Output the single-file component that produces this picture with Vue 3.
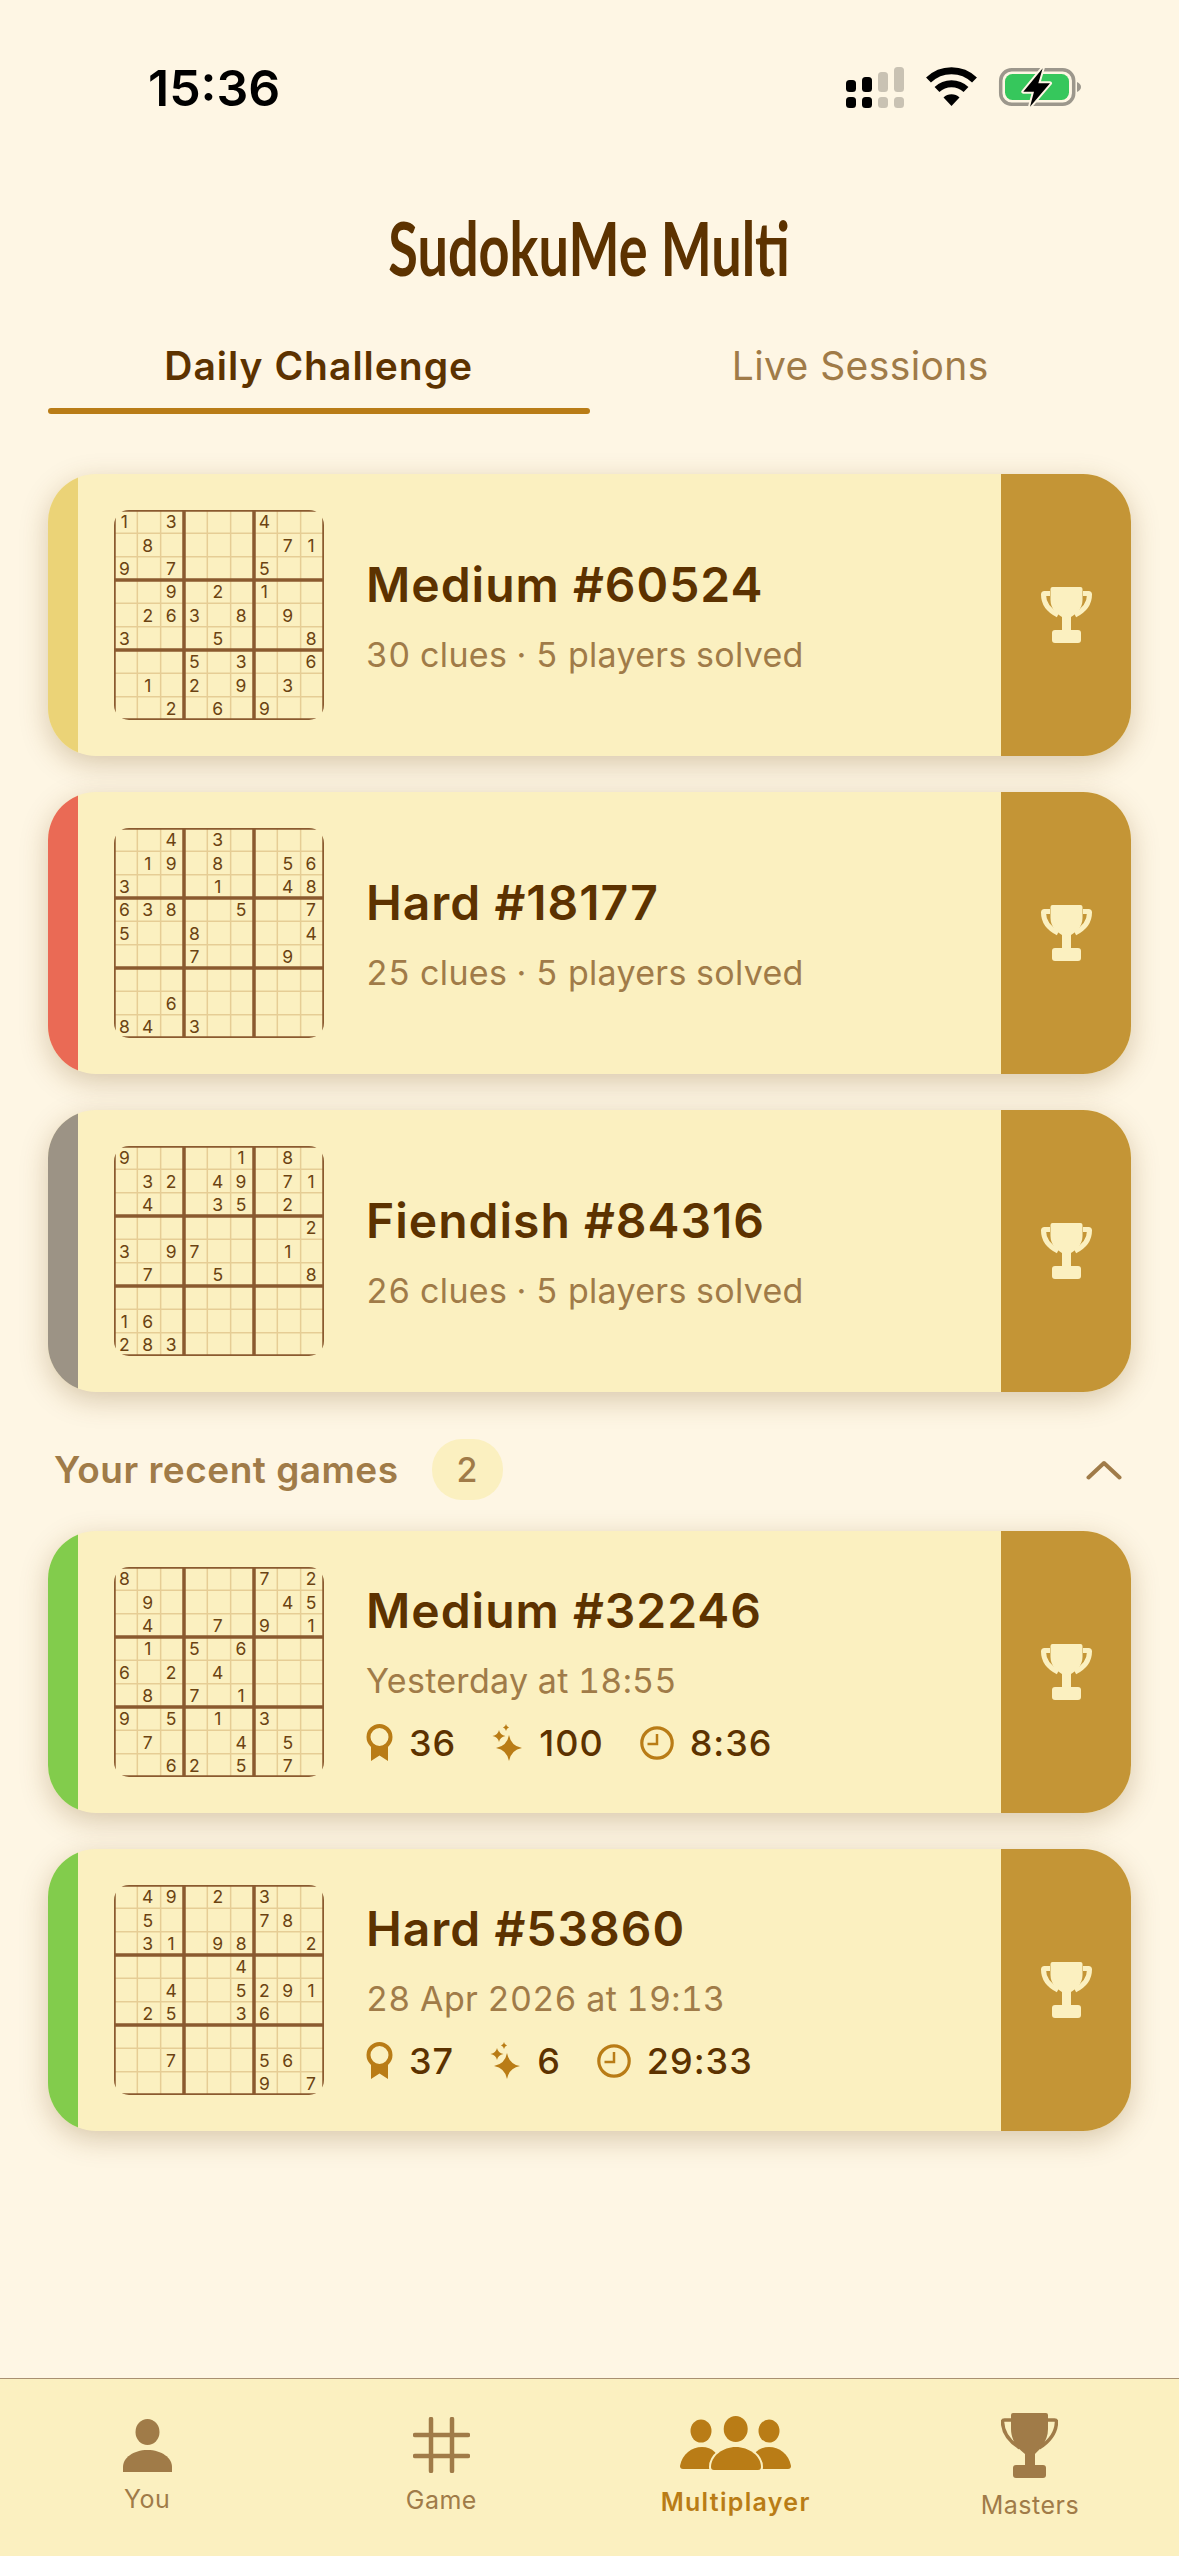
<script setup>
// one string per board, row by row, "." is an empty cell
const rows = {
  m60524: "1.3...4.." + ".8.....71" + "9.7...5.." + "..9.2.1.." + ".263.8.9." + "3...5...8" + "...5.3..6" + ".1.2.9.3." + "..2.6.9..",
  h18177: "..4.3...." + ".19.8..56" + "3...1..48" + "638..5..7" + "5..8....4" + "...7...9." + "........." + "..6......" + "84.3.....",
  f84316: "9....1.8." + ".32.49.71" + ".4..35.2." + "........2" + "3.97...1." + ".7..5...8" + "........." + "16......." + "283......",
  m32246: "8.....7.2" + ".9.....45" + ".4..7.9.1" + ".1.5.6..." + "6.2.4...." + ".8.7.1..." + "9.5.1.3.." + ".7...4.5." + "..62.5.7.",
  h53860: ".49.2.3.." + ".5....78." + ".31.98..2" + ".....4..." + "..4..5291" + ".25..36.." + "........." + "..7...56." + "......9.7",
};

const daily = [
  { id: "m60524", name: "Medium #60524", sub: "30 clues · 5 players solved", strip: "#ebd377" },
  { id: "h18177", name: "Hard #18177", sub: "25 clues · 5 players solved", strip: "#ea6a55" },
  { id: "f84316", name: "Fiendish #84316", sub: "26 clues · 5 players solved", strip: "#9c9385" },
];

const recent = [
  { id: "m32246", name: "Medium #32246", sub: "Yesterday at 18:55", strip: "#82cc4c", stats: ["36", "100", "8:36"] },
  { id: "h53860", name: "Hard #53860", sub: "28 Apr 2026 at 19:13", strip: "#82cc4c", stats: ["37", "6", "29:33"] },
];

function cells(id) {
  const out = [];
  [...rows[id]].forEach((ch, i) => {
    if (ch !== ".") out.push({ ch, x: (i % 9) * 23.33 + 10.4, y: Math.floor(i / 9) * 23.33 + 18.2 });
  });
  return out;
}

const thin = [1, 2, 4, 5, 7, 8].map((n) => n * 23.33);
const thick = [0, 70, 140, 210];
</script>

<template>
  <div class="page">
    <div class="status">
      <span class="time">15:36</span>
      <svg class="status-icons" width="235" height="42" viewBox="0 0 235 42">
        <rect x="0" y="13" width="10" height="12" rx="3.5" fill="#000" />
        <rect x="16" y="10" width="10" height="15" rx="3.5" fill="#000" />
        <rect x="32" y="5" width="10" height="20" rx="3.5" fill="#c9c2b3" />
        <rect x="48" y="0" width="10" height="25" rx="3.5" fill="#c9c2b3" />
        <rect x="0" y="30" width="10" height="11" rx="3.5" fill="#000" />
        <rect x="16" y="30" width="10" height="11" rx="3.5" fill="#000" />
        <rect x="32" y="30" width="10" height="11" rx="3.5" fill="#c9c2b3" />
        <rect x="48" y="30" width="10" height="11" rx="3.5" fill="#c9c2b3" />
        <path d="M82.5 13 A33 33 0 0 1 128.5 13" fill="none" stroke="#000" stroke-width="7" />
        <path d="M91 22.5 A21 21 0 0 1 120 22.5" fill="none" stroke="#000" stroke-width="7" />
        <path d="M97.5 30.5 A11.5 11.5 0 0 1 113.5 30.5 L105.5 39 Z" fill="#000" />
        <rect x="154.7" y="2.7" width="73" height="34.6" rx="11" fill="none" stroke="#9c978c" stroke-width="3.5" />
        <rect x="159" y="7" width="64" height="26" rx="7.5" fill="#36c75c" />
        <path d="M231 15 Q235 17 235 20 Q235 23 231 25 Z" fill="#9c978c" />
        <path d="M196.7 1.3 L177.3 24.7 H188 L184 39.7 L204 16.3 H192.3 Z" fill="#000" stroke="#fef6e4" stroke-width="4" paint-order="stroke" stroke-linejoin="round" />
      </svg>
    </div>

    <h1 class="title"><span>SudokuMe Multi</span></h1>

    <div class="tabs">
      <div class="tab active">Daily Challenge<i class="bar"></i></div>
      <div class="tab">Live Sessions</div>
    </div>

    <main class="content">
      <div class="list">
        <div v-for="g in daily" :key="g.id" class="card">
          <div class="strip" :style="{ background: g.strip }"></div>
          <div class="board">
            <svg width="210" height="210" viewBox="0 0 210 210">
              <path v-for="p in thin" :key="'t' + p" :d="`M${p} 0V210M0 ${p}H210`" stroke="#e6cd95" stroke-width="1.5" fill="none" />
              <path v-for="p in thick" :key="'k' + p" :d="`M${p} 0V210M0 ${p}H210`" stroke="#8a5a2f" stroke-width="3.5" fill="none" />
              <text v-for="c in cells(g.id)" :key="c.x + '-' + c.y" :x="c.x" :y="c.y" class="digit">{{ c.ch }}</text>
            </svg>
          </div>
          <div class="info">
            <div class="name">{{ g.name }}</div>
            <div class="sub">{{ g.sub }}</div>
          </div>
          <div class="cta">
            <svg width="51" height="56" viewBox="0 0 51 56" fill="#fbf0c0">
              <path d="M11.5 0H39.5Q41.5 0 41.5 2V13C41.5 22 35 27 30 30V43H21V30C16 27 9.5 22 9.5 13V2Q9.5 0 11.5 0Z" />
              <path d="M9 6.5H3.5Q2.5 6.5 2.5 7.5C2.5 17 9 24 17 28M42 6.5H47.5Q48.5 6.5 48.5 7.5C48.5 17 42 24 34 28" fill="none" stroke="#fbf0c0" stroke-width="5" />
              <rect x="11" y="43" width="29" height="13" rx="3" />
            </svg>
          </div>
        </div>
      </div>

      <div class="recent-head">
        <span class="recent-title">Your recent games</span>
        <span class="count">2</span>
        <svg class="chevron" width="36" height="20" viewBox="0 0 36 20">
          <path d="M2.5 17.5L18 3L33.5 17.5" fill="none" stroke="#a07b48" stroke-width="4" stroke-linecap="round" stroke-linejoin="round" />
        </svg>
      </div>

      <div class="list">
        <div v-for="g in recent" :key="g.id" class="card">
          <div class="strip" :style="{ background: g.strip }"></div>
          <div class="board">
            <svg width="210" height="210" viewBox="0 0 210 210">
              <path v-for="p in thin" :key="'t' + p" :d="`M${p} 0V210M0 ${p}H210`" stroke="#e6cd95" stroke-width="1.5" fill="none" />
              <path v-for="p in thick" :key="'k' + p" :d="`M${p} 0V210M0 ${p}H210`" stroke="#8a5a2f" stroke-width="3.5" fill="none" />
              <text v-for="c in cells(g.id)" :key="c.x + '-' + c.y" :x="c.x" :y="c.y" class="digit">{{ c.ch }}</text>
            </svg>
          </div>
          <div class="info">
            <div class="name">{{ g.name }}</div>
            <div class="sub">{{ g.sub }}</div>
            <div class="stats">
              <span class="stat">
                <svg width="27" height="37" viewBox="0 0 27 37">
                  <path d="M5 22V37L13.5 31.5L22 37V22Z" fill="#b97c16" />
                  <circle cx="13.5" cy="13" r="11" fill="#fbf0c0" stroke="#b97c16" stroke-width="4" />
                </svg>
                {{ g.stats[0] }}
              </span>
              <span class="stat">
                <svg width="31" height="37" viewBox="0 0 31 37" fill="#b97c16">
                  <path d="M17 11Q19 22 30 24Q19 26 17 37Q15 26 4 24Q15 22 17 11Z" />
                  <path d="M7 6Q8 11 13.5 12Q8 13 7 18Q6 13 0.5 12Q6 11 7 6Z" />
                  <path d="M14 0Q14.5 3 17 3.5Q14.5 4 14 7Q13.5 4 11 3.5Q13.5 3 14 0Z" />
                </svg>
                {{ g.stats[1] }}
              </span>
              <span class="stat">
                <svg width="34" height="34" viewBox="0 0 34 34">
                  <circle cx="17" cy="17" r="15.2" fill="none" stroke="#b97c16" stroke-width="3.2" />
                  <path d="M17 8V18H7.5" fill="none" stroke="#b97c16" stroke-width="2.5" />
                </svg>
                {{ g.stats[2] }}
              </span>
            </div>
          </div>
          <div class="cta">
            <svg width="51" height="56" viewBox="0 0 51 56" fill="#fbf0c0">
              <path d="M11.5 0H39.5Q41.5 0 41.5 2V13C41.5 22 35 27 30 30V43H21V30C16 27 9.5 22 9.5 13V2Q9.5 0 11.5 0Z" />
              <path d="M9 6.5H3.5Q2.5 6.5 2.5 7.5C2.5 17 9 24 17 28M42 6.5H47.5Q48.5 6.5 48.5 7.5C48.5 17 42 24 34 28" fill="none" stroke="#fbf0c0" stroke-width="5" />
              <rect x="11" y="43" width="29" height="13" rx="3" />
            </svg>
          </div>
        </div>
      </div>
    </main>

    <nav class="nav">
      <div class="nav-item you">
        <svg width="49" height="53" viewBox="0 0 49 53" fill="#a07b48">
          <ellipse cx="24.5" cy="13" rx="12" ry="13" />
          <path d="M0 48C0 39 10 31 24.5 31C39 31 49 39 49 48V53H0Z" />
        </svg>
        <span>You</span>
      </div>
      <div class="nav-item game">
        <svg width="57" height="56" viewBox="0 0 57 56" fill="none" stroke="#a07b48" stroke-width="4.5" stroke-linecap="round">
          <path d="M18 2V54M39 2V54M2 18H55M2 39H55" />
        </svg>
        <span>Game</span>
      </div>
      <div class="nav-item multi">
        <svg width="111" height="54" viewBox="0 0 111 54" fill="#b97c16">
          <ellipse cx="55.7" cy="13" rx="12" ry="13" />
          <ellipse cx="21" cy="15" rx="10.5" ry="11.5" />
          <ellipse cx="89" cy="15" rx="10.5" ry="11.5" />
          <path d="M3 53Q0 53 0 50C2 38 12 31 22 31C32 31 40 38 40 50V53Z" />
          <path d="M108 53Q111 53 111 50C109 38 99 31 89 31C79 31 71 38 71 50V53Z" />
          <path d="M34 54Q31 54 31 51C31 40 43 31 55.7 31C69 31 81 40 81 51Q81 54 78 54Z" stroke="#fbf0c0" stroke-width="4" paint-order="stroke" />
        </svg>
        <span>Multiplayer</span>
      </div>
      <div class="nav-item masters">
        <svg width="57" height="65" viewBox="0 0 57 65" fill="#a07b48">
          <path d="M12 0H45Q47 0 47 2V16C47 29 38 37 34 41V53H24V41C19 37 10 29 10 16V2Q10 0 12 0Z" />
          <path d="M10 7H3.5Q1.5 7 1.5 9C2 21 11 30 19 35M47 7H53.5Q55.5 7 55.5 9C55 21 46 30 38 35" fill="none" stroke="#a07b48" stroke-width="3.5" />
          <rect x="12" y="52" width="33" height="13" rx="3" />
        </svg>
        <span>Masters</span>
      </div>
    </nav>
  </div>
</template>

<style scoped>
.page { width: 1179px; height: 2556px; display: flex; flex-direction: column; background: #fef6e4; font-family: Inter, "Liberation Sans", sans-serif; overflow: hidden; }

.status { display: flex; justify-content: space-between; padding: 60px 98px 0 148px; height: 56px; }
.time { font-size: 50px; font-weight: 600; line-height: 56px; color: #000; }
.status-icons { margin-top: 7px; }

.title { margin: 92px 0 0; height: 80px; display: flex; justify-content: center; }
.title span { font-family: Lato, sans-serif; font-size: 74px; font-weight: 700; line-height: 80px; color: #5c3200; transform: scaleX(0.73); white-space: nowrap; }

.tabs { display: flex; margin: 54px 48px 0; height: 72px; }
.tab { flex: 1; position: relative; text-align: center; font-size: 39px; line-height: 48px; color: #a07b48; letter-spacing: 0.4px; }
.tab.active { font-weight: 600; color: #5c3200; letter-spacing: 1px; }
.bar { position: absolute; left: 0; right: 0; bottom: 0; height: 6px; border-radius: 3px; background: #b97c16; }

.content { flex: 1; padding: 60px 48px 0; }
.list { display: flex; flex-direction: column; gap: 36px; }

.card { display: flex; align-items: center; height: 282px; border-radius: 48px; overflow: hidden; background: #fbf0c0; box-shadow: 0 8px 28px rgba(110, 70, 10, 0.26); }
.strip { width: 30px; align-self: stretch; }
.board { width: 210px; height: 210px; margin-left: 36px; border-radius: 15px; overflow: hidden; flex: none; }
.board svg { display: block; }
.digit { font-size: 17.5px; fill: #6b4312; text-anchor: middle; }
.info { flex: 1; margin-left: 42px; padding-top: 1px; }
.name { font-size: 48px; font-weight: 600; line-height: 58px; color: #5c3200; letter-spacing: 1px; }
.sub { margin-top: 20px; font-size: 34px; line-height: 42px; color: #a07b48; letter-spacing: 0.3px; font-variant-numeric: tabular-nums; }
.stats { display: flex; gap: 36px; margin-top: 20px; height: 42px; align-items: center; }
.stat { display: flex; align-items: center; gap: 16px; font-size: 36px; font-weight: 500; color: #5c3200; letter-spacing: 1px; }
.cta { width: 130px; align-self: stretch; display: flex; align-items: center; justify-content: center; background: #c49536; flex: none; }

.recent-head { display: flex; align-items: center; height: 123px; padding: 16px 0 0 6px; }
.recent-title { font-size: 37px; font-weight: 600; color: #a07b48; letter-spacing: 0.5px; }
.count { width: 71px; height: 61px; margin-left: 33px; border-radius: 30px; background: #fbf0c0; color: #a07b48; font-size: 34px; font-weight: 500; display: flex; align-items: center; justify-content: center; }
.chevron { margin-left: auto; margin-right: 9px; }

.nav { height: 178px; box-sizing: border-box; display: grid; grid-template-columns: repeat(4, 1fr); padding: 34px 2px 0 0; border-top: 1.5px solid #a89070; background: #fbf0c0; }
.nav-item { display: flex; flex-direction: column; align-items: center; font-size: 25px; line-height: 30px; color: #a07b48; letter-spacing: 0.5px; }
.nav-item span { margin-top: 12px; }
.you { padding-top: 6px; }
.game { padding-top: 4px; }
.multi { padding-top: 3px; color: #b97c16; font-weight: 600; letter-spacing: 1.3px; }
.multi span { margin-top: 17px; }
</style>

<style>
body { background: #fef6e4; }
</style>
